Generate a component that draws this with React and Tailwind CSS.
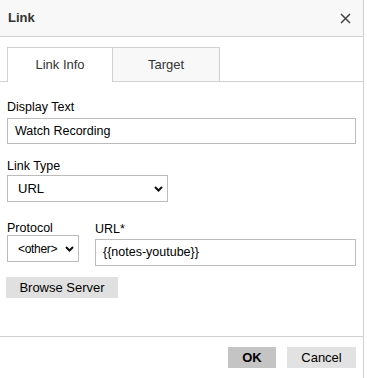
import React from "react";

const Chevron = () => (
  <svg width="9" height="6" viewBox="0 0 9 6" className="shrink-0">
    <path d="M1 1 L4.5 4.5 L8 1" fill="none" stroke="#111" strokeWidth="2" />
  </svg>
);

export default function App() {
  const font = { fontFamily: '"Liberation Sans", Arial, sans-serif' };
  return (
    <div
      className="w-[364px] h-[378px] bg-white border-r border-[#d1d1d1] flex flex-col text-[#333] text-[13px]"
      style={font}
    >
      <div className="h-[37px] shrink-0 bg-[#f8f8f8] border-b border-[#d1d1d1] flex items-center justify-between pl-[8px] pr-[12px]">
        <span className="font-bold text-[13px] text-[#333]">Link</span>
        <svg width="11" height="11" viewBox="0 0 11 11">
          <path d="M1 1 L10 10 M10 1 L1 10" stroke="#444" strokeWidth="1.5" />
        </svg>
      </div>

      <div className="pt-[10px] border-b border-[#d1d1d1] flex pl-[7px]">
        <div className="w-[106px] h-[35px] -mb-px bg-white border border-b-0 border-[#d1d1d1] flex items-center justify-center text-[13px] text-[#333]">
          Link Info
        </div>
        <div className="w-[107px] h-[34px] bg-[#f8f8f8] border border-l-0 border-b-0 border-[#d1d1d1] flex items-center justify-center text-[13px] text-[#333]">
          Target
        </div>
      </div>

      <div className="flex-1 px-[7px] pt-[18px]">
        <div className="text-[12.5px] leading-[15px] text-black">Display Text</div>
        <div className="mt-[3px] w-[349px] h-[26px] border border-[#bcbcbc] flex items-center pl-[7px] text-[12.5px] text-black">
          Watch Recording
        </div>

        <div className="mt-[15px] text-[12.5px] leading-[15px] text-black">Link Type</div>
        <div className="mt-[1px] w-[161px] h-[27px] border border-[#bcbcbc] flex items-center justify-between pl-[10px] pr-[4px] text-[13px] text-black">
          <span>URL</span>
          <Chevron />
        </div>

        <div className="mt-[19px] flex gap-[16px]">
          <div className="flex flex-col">
            <div className="text-[12.5px] leading-[15px] text-black">Protocol</div>
            <div className="mt-[-1px] w-[72px] h-[27px] border border-[#bcbcbc] flex items-center justify-between pl-[10px] pr-[4px] text-[12px] text-black">
              <span className="tracking-[-0.3px]">&lt;other&gt;</span>
              <Chevron />
            </div>
          </div>
          <div className="flex flex-col">
            <div className="text-[12.5px] leading-[15px] text-black pt-[1px]">URL*</div>
            <div className="mt-[2px] w-[261px] h-[27px] border border-[#bcbcbc] flex items-center pl-[7px] text-[12.5px] text-black">
              {"{{notes-youtube}}"}
            </div>
          </div>
        </div>

        <div className="mt-[11px] -ml-[1px] w-[112px] h-[21px] bg-[#e0e0e0] flex items-center justify-center text-[13px] text-black">
          Browse Server
        </div>
      </div>

      <div className="h-[42px] shrink-0 border-t border-[#d1d1d1] flex justify-end items-start pt-[10px] pr-[7px] gap-[11px]">
        <div className="w-[48px] h-[21px] bg-[#c4c4c4] flex items-center justify-center font-bold text-[13px] text-black">
          OK
        </div>
        <div className="w-[69px] h-[21px] bg-[#e2e2e2] flex items-center justify-center text-[13px] text-black">
          Cancel
        </div>
      </div>
    </div>
  );
}
